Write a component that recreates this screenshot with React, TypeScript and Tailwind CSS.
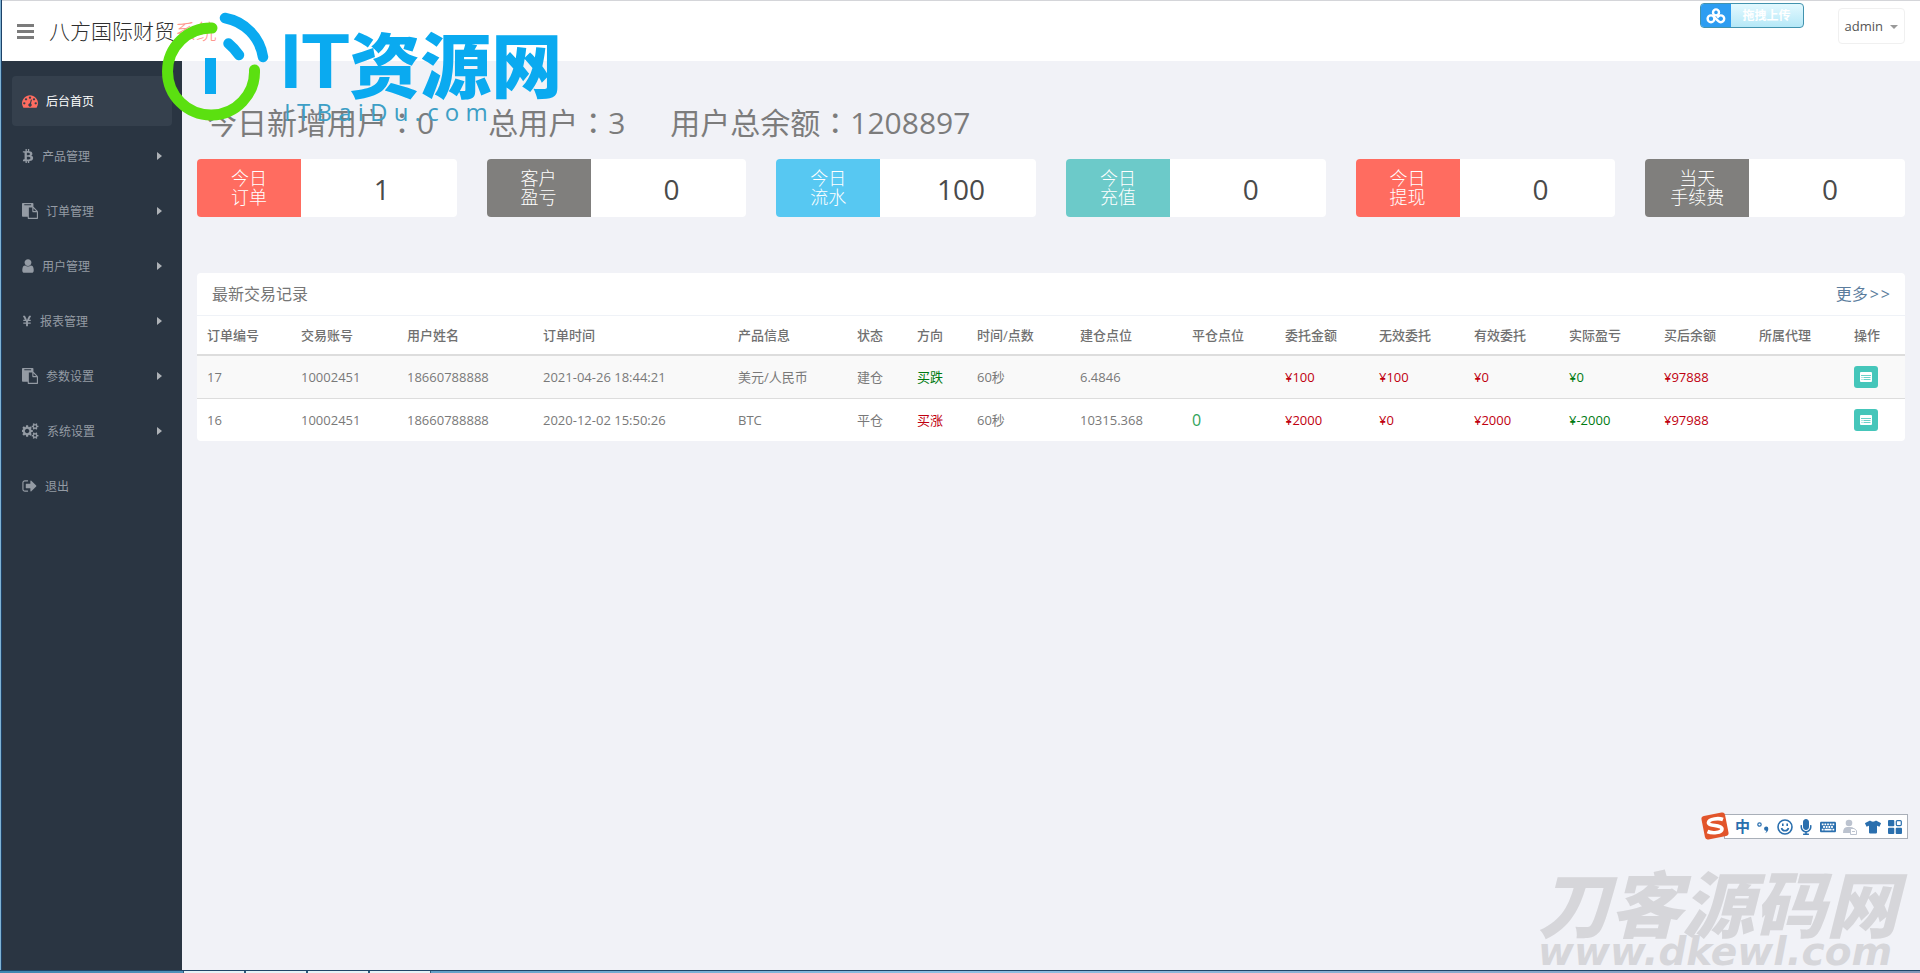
import type { ReactNode } from "react";
import { FaBtc, FaYenSign, FaMicrophone, FaKeyboard, FaTshirt } from "react-icons/fa";

const PATHS = {
  dashboard:
    "M384 1152q0-53-37.5-90.5t-90.5-37.5-90.5 37.5-37.5 90.5 37.5 90.5 90.5 37.5 90.5-37.5 37.5-90.5zm192-448q0-53-37.5-90.5t-90.5-37.5-90.5 37.5-37.5 90.5 37.5 90.5 90.5 37.5 90.5-37.5 37.5-90.5zm428 481l101-382q6-26-7.5-48.5t-38.5-29.5-48 6.5-30 39.5l-101 382q-60 5-107 43.5t-63 98.5q-20 77 20 146t117 89 146-20 89-117q16-60-6-117t-72-91zm660-33q0-53-37.5-90.5t-90.5-37.5-90.5 37.5-37.5 90.5 37.5 90.5 90.5 37.5 90.5-37.5 37.5-90.5zm-640-640q0-53-37.5-90.5t-90.5-37.5-90.5 37.5-37.5 90.5 37.5 90.5 90.5 37.5 90.5-37.5 37.5-90.5zm448 192q0-53-37.5-90.5t-90.5-37.5-90.5 37.5-37.5 90.5 37.5 90.5 90.5 37.5 90.5-37.5 37.5-90.5zm320 448q0 261-141 483-19 29-54 29h-1402q-35 0-54-29-141-221-141-483 0-182 71-348t191-286 286-191 348-71 348 71 286 191 191 286 71 348z",
  paste:
    "M768 1664h896v-640h-416q-40 0-68-28t-28-68v-416h-384v1152zm256-1440v-64q0-13-9.5-22.5t-22.5-9.5h-704q-13 0-22.5 9.5t-9.5 22.5v64q0 13 9.5 22.5t22.5 9.5h704q13 0 22.5-9.5t9.5-22.5zm256 672h299l-299-299v299zm512 128v672q0 40-28 68t-68 28h-960q-40 0-68-28t-28-68v-160h-544q-40 0-68-28t-28-68v-1344q0-40 28-68t68-28h1088q40 0 68 28t28 68v328q21 13 36 28l408 408q28 28 48 76t20 88z",
  user:
    "M1536 1399q0 109-62.5 187t-150.5 78h-854q-88 0-150.5-78t-62.5-187q0-85 8.5-160.5t31.5-152 58.5-131 94-89 134.5-34.5q131 128 313 128t313-128q76 0 134.5 34.5t94 89 58.5 131 31.5 152 8.5 160.5zm-256-887q0 159-112.5 271.5t-271.5 112.5-271.5-112.5-112.5-271.5 112.5-271.5 271.5-112.5 271.5 112.5 112.5 271.5z",
  cogs:
    "M832 896q0-106-75-181t-181-75-181 75-75 181 75 181 181 75 181-75 75-181zm768 512q0-52-38-90t-90-38-90 38-38 90q0 53 37.5 90.5t90.5 37.5 90.5-37.5 37.5-90.5zm0-1024q0-52-38-90t-90-38-90 38-38 90q0 53 37.5 90.5t90.5 37.5 90.5-37.5 37.5-90.5zm-384 421v185q0 10-7 19.5t-16 10.5l-155 24q-11 35-32 76 34 48 90 115 7 11 7 20 0 12-7 19-23 30-82.5 89.5t-78.5 59.5q-11 0-21-7l-115-90q-37 19-77 31-11 108-23 155-7 24-30 24h-186q-11 0-20-7.5t-10-17.5l-23-153q-34-10-75-31l-118 89q-7 7-20 7-11 0-21-8-144-133-144-160 0-9 7-19 10-14 41-53t47-61q-23-44-35-82l-152-24q-10-1-17-9.5t-7-19.5v-185q0-10 7-19.5t16-10.5l155-24q11-35 32-76-34-48-90-115-7-11-7-20 0-12 7-20 22-30 82-89t79-59q11 0 21 7l115 90q34-18 77-32 11-108 23-154 7-24 30-24h186q11 0 20 7.5t10 17.5l23 153q34 10 75 31l118-89q8-7 20-7 11 0 21 8 144 133 144 160 0 8-7 19-12 16-42 54t-45 60q23 48 34 82l152 23q10 2 17 10.5t7 19.5zm640 533v140q0 16-149 31-12 27-30 52 51 113 51 138 0 4-4 7-122 71-124 71-8 0-46-47t-52-68q-20 2-30 2t-30-2q-14 21-52 68t-46 47q-2 0-124-71-4-3-4-7 0-25 51-138-18-25-30-52-149-15-149-31v-140q0-16 149-31 13-29 30-52-51-113-51-138 0-4 4-7 4-2 35-20t59-34 30-16q8 0 46 46.5t52 67.5q20-2 30-2t30 2q51-71 92-112l6-2q4 0 124 70 4 3 4 7 0 25-51 138 17 23 30 52 149 15 149 31zm0-1024v140q0 16-149 31-12 27-30 52 51 113 51 138 0 4-4 7-122 71-124 71-8 0-46-47t-52-68q-20 2-30 2t-30-2q-14 21-52 68t-46 47q-2 0-124-71-4-3-4-7 0-25 51-138-18-25-30-52-149-15-149-31v-140q0-16 149-31 13-29 30-52-51-113-51-138 0-4 4-7 4-2 35-20t59-34 30-16q8 0 46 46.5t52 67.5q20-2 30-2t30 2q51-71 92-112l6-2q4 0 124 70 4 3 4 7 0 25-51 138 17 23 30 52 149 15 149 31z",
  signOut:
    "M704 1440q0 4 1 20t.5 26.5-3 23.5-10 19.5-20.5 6.5h-320q-119 0-203.5-84.5t-84.5-203.5v-704q0-119 84.5-203.5t203.5-84.5h320q13 0 22.5 9.5t9.5 22.5q0 4 1 20t.5 26.5-3 23.5-10 19.5-20.5 6.5h-320q-66 0-113 47t-47 113v704q0 66 47 113t113 47h312l11.5 1 11.5 3 8 5.5 7 9 2 13.5zm928-544q0 26-19 45l-544 544q-19 19-45 19t-45-19-19-45v-288h-448q-26 0-45-19t-19-45v-384q0-26 19-45t45-19h448v-288q0-26 19-45t45-19 45 19l544 544q19 19 19 45z",
};

function Glyph({ d, viewBox, className }: { d: string; viewBox: string; className: string }) {
  return (
    <svg viewBox={viewBox} className={className} fill="currentColor" aria-hidden="true">
      <path d={d} />
    </svg>
  );
}

type MenuItem = { label: string; icon: ReactNode; active?: boolean; children?: boolean };

const paste = <Glyph d={PATHS.paste} viewBox="0 0 1792 1792" className="h-4 w-4" />;

const MENU: MenuItem[] = [
  {
    label: "后台首页",
    active: true,
    icon: <Glyph d={PATHS.dashboard} viewBox="0 0 1792 1792" className="h-4 w-4 text-[#ff6c60]" />,
  },
  { label: "产品管理", children: true, icon: <FaBtc className="h-[14px] w-3" /> },
  { label: "订单管理", children: true, icon: paste },
  { label: "用户管理", children: true, icon: <Glyph d={PATHS.user} viewBox="256 0 1280 1792" className="h-4 w-3" /> },
  { label: "报表管理", children: true, icon: <FaYenSign className="h-3 w-[10px]" /> },
  { label: "参数设置", children: true, icon: paste },
  { label: "系统设置", children: true, icon: <Glyph d={PATHS.cogs} viewBox="0 0 1920 1792" className="h-4 w-[17px]" /> },
  { label: "退出", icon: <Glyph d={PATHS.signOut} viewBox="64 0 1600 1792" className="h-4 w-[15px]" /> },
];

const CARDS = [
  { title: ["今日", "订单"], value: "1", color: "bg-[#ff6c60]" },
  { title: ["客户", "盈亏"], value: "0", color: "bg-[#807f7d]" },
  { title: ["今日", "流水"], value: "100", color: "bg-[#57c8f2]" },
  { title: ["今日", "充值"], value: "0", color: "bg-[#6ccac9]" },
  { title: ["今日", "提现"], value: "0", color: "bg-[#ff6c60]" },
  { title: ["当天", "手续费"], value: "0", color: "bg-[#807f7d]" },
];

const RED = "text-[#c00010]";
const GREEN = "text-[#007a12]";

const COLUMNS = [
  { name: "订单编号", width: "w-[94px]" },
  { name: "交易账号", width: "w-[106px]" },
  { name: "用户姓名", width: "w-[136px]" },
  { name: "订单时间", width: "w-[195px]" },
  { name: "产品信息", width: "w-[119px]" },
  { name: "状态", width: "w-[60px]" },
  { name: "方向", width: "w-[60px]" },
  { name: "时间/点数", width: "w-[103px]" },
  { name: "建仓点位", width: "w-[112px]" },
  { name: "平仓点位", width: "w-[93px]" },
  { name: "委托金额", width: "w-[94px]" },
  { name: "无效委托", width: "w-[95px]" },
  { name: "有效委托", width: "w-[95px]" },
  { name: "实际盈亏", width: "w-[95px]" },
  { name: "买后余额", width: "w-[95px]" },
  { name: "所属代理", width: "w-[95px]" },
  { name: "操作", width: "w-[61px]" },
];

type Cell = { text: string; color?: string };

const ROWS: Cell[][] = [
  [
    { text: "17" },
    { text: "10002451" },
    { text: "18660788888" },
    { text: "2021-04-26 18:44:21" },
    { text: "美元/人民币" },
    { text: "建仓" },
    { text: "买跌", color: GREEN },
    { text: "60秒" },
    { text: "6.4846" },
    { text: "" },
    { text: "¥100", color: RED },
    { text: "¥100", color: RED },
    { text: "¥0", color: RED },
    { text: "¥0", color: GREEN },
    { text: "¥97888", color: RED },
    { text: "" },
  ],
  [
    { text: "16" },
    { text: "10002451" },
    { text: "18660788888" },
    { text: "2020-12-02 15:50:26" },
    { text: "BTC" },
    { text: "平仓" },
    { text: "买涨", color: RED },
    { text: "60秒" },
    { text: "10315.368" },
    { text: "0", color: "text-base text-[#2fa35a]" },
    { text: "¥2000", color: RED },
    { text: "¥0", color: RED },
    { text: "¥2000", color: RED },
    { text: "¥-2000", color: GREEN },
    { text: "¥97988", color: RED },
    { text: "" },
  ],
];

function Colon() {
  return <span className="font-['Noto_Sans_CJK_TC',sans-serif]">：</span>;
}

function Header() {
  return (
    <header className="flex h-[61px] items-start justify-between border-t border-[#d4d5d9] bg-white pr-[15px] pl-[15px]">
      <div className="flex h-[60px] items-center gap-[15px]">
        <button type="button" aria-label="切换菜单" className="flex w-[17px] flex-col gap-[3px]">
          <span className="h-[3px] w-full bg-[#7b7b7b]" />
          <span className="h-[3px] w-full bg-[#7b7b7b]" />
          <span className="h-[3px] w-full bg-[#7b7b7b]" />
        </button>
        <a href="#" className="text-[21px] leading-[30px] font-light text-[#2e2e2e]">
          八方国际财贸<span className="text-[#ff6c60] opacity-70">系统</span>
        </a>
      </div>
      <div className="flex items-start gap-[34px]">
        <button
          type="button"
          className="mt-[2px] flex h-[25px] w-[104px] overflow-hidden rounded-[4px] border border-[#4293ae] bg-linear-to-b from-[#e3f9ff] to-[#b5e8f7]"
        >
          <span className="flex h-full w-[30px] items-center justify-center bg-[#2d9df1]">
            <svg viewBox="0 0 20 16" className="h-4 w-5" fill="none" stroke="#fff" strokeWidth="2.4" aria-hidden="true">
              <circle cx="10" cy="4.4" r="3" />
              <circle cx="5" cy="10.8" r="3.4" />
              <path d="M7.400 8.400l5 4.800a3.400 3.400 0 1 0 0-4.800l-1.200 1.200" />
            </svg>
          </span>
          <span className="flex-1 text-xs leading-[23px] font-bold text-white">拖拽上传</span>
        </button>
        <button
          type="button"
          className="mt-[7px] flex h-9 items-center gap-[7px] rounded-[4px] border border-[#f0f0f0] px-[6px] pt-[2px] text-[13px] text-[#555]"
        >
          admin
          <svg viewBox="0 0 8 4" className="h-1 w-2" fill="#999" aria-hidden="true">
            <path d="M0 0h8L4 4z" />
          </svg>
        </button>
      </div>
    </header>
  );
}

function Sidebar() {
  return (
    <nav className="w-[180px] shrink-0 bg-[#2a3542] px-[10px] pt-[15px]">
      <ul className="flex flex-col gap-[5px]">
        {MENU.map((item) => (
          <li key={item.label}>
            <a
              href="#"
              className={
                item.active
                  ? "flex h-[50px] items-center gap-2 rounded-[4px] bg-[#35404d] px-[10px] text-xs text-white"
                  : "flex h-[50px] items-center gap-2 rounded-[4px] px-[10px] text-xs text-[#949ba4]"
              }
            >
              {item.icon}
              <span className="flex-1 pt-[2px]">{item.label}</span>
              {item.children && (
                <svg viewBox="0 0 5 8" className="h-2 w-[5px]" fill="#aeb2b7" aria-hidden="true">
                  <path d="M0 0l5 4-5 4z" />
                </svg>
              )}
            </a>
          </li>
        ))}
      </ul>
    </nav>
  );
}

function Records() {
  return (
    <section className="mt-14 overflow-hidden rounded-[4px] bg-white">
      <div className="flex h-[43px] items-center justify-between border-b border-[#eff2f7] px-[15px] text-base text-[#767676]">
        <h2>最新交易记录</h2>
        <a href="#" className="flex gap-[2px] text-[#5b7d9d]">
          <span>更多</span>
          <span>&gt;</span>
          <span>&gt;</span>
        </a>
      </div>
      <table className="w-full table-fixed border-collapse text-left text-[13px] leading-[18px] text-[#797979]">
        <colgroup>
          {COLUMNS.map((c) => (
            <col key={c.name} className={c.width} />
          ))}
        </colgroup>
        <thead>
          <tr className="h-[39px] border-b-2 border-[#ddd]">
            {COLUMNS.map((c) => (
              <th key={c.name} className="pl-[10px] font-medium whitespace-nowrap text-[#707070]">
                {c.name}
              </th>
            ))}
          </tr>
        </thead>
        <tbody>
          {ROWS.map((row, i) => (
            <tr key={row[0].text} className={i === 0 ? "h-[43px] border-b border-[#ddd] bg-[#f9f9f9]" : "h-[43px]"}>
              {row.map((cell, j) => (
                <td key={j} className={"pl-[10px] whitespace-nowrap " + (cell.color ?? "")}>
                  {cell.text}
                </td>
              ))}
              <td className="pl-[10px]">
                <button
                  type="button"
                  aria-label="查看"
                  className="flex h-[22px] w-6 items-center justify-center rounded-[3px] bg-[#45c6ba]"
                >
                  <svg viewBox="0 0 12 10" className="h-[10px] w-3" aria-hidden="true">
                    <rect width="12" height="10" rx="1" fill="#fff" />
                    <path d="M1 3.5h10M3.5 5.5h7M3.5 7.5h7M1.5 5.5h1M1.5 7.5h1" stroke="#45c6ba" strokeWidth="0.8" />
                  </svg>
                </button>
              </td>
            </tr>
          ))}
        </tbody>
      </table>
    </section>
  );
}

function SiteLogo() {
  return (
    <div className="pointer-events-none absolute top-[10px] left-[160px] flex">
      <svg viewBox="160 10 112 114" className="h-[114px] w-28" fill="none" strokeLinecap="round" aria-hidden="true">
        <path d="M212 28A43.500 43.500 0 1 0 254.500 70" stroke="#5be010" strokeWidth="11" />
        <path d="M225 18A47 47 0 0 1 263 57" stroke="#0aaaf0" strokeWidth="10.500" />
        <path d="M228.500 43.500Q234 48 239 55" stroke="#0aaaf0" strokeWidth="10.500" />
        <path d="M210.500 58V94" stroke="#0aaaf0" strokeWidth="11" strokeLinecap="butt" />
      </svg>
      <div className="flex flex-col pt-4 pl-2">
        <div className="flex h-[70px] items-center font-black whitespace-nowrap text-[#0aaaf0]">
          <span className="font-['Liberation_Sans',sans-serif] text-[78px] leading-[70px]">IT</span>
          <span className="font-['Noto_Sans_CJK_SC',sans-serif] text-[71px] leading-[70px]">资源网</span>
        </div>
        <div className="pl-1 text-2xl leading-8 whitespace-nowrap text-[#3d9fc6]">I T B a i D u . c o m</div>
      </div>
    </div>
  );
}

function InputMethodBar() {
  return (
    <div className="absolute right-3 bottom-[134px] flex h-[25px] w-[184px] items-center justify-between border border-[#a9afb8] bg-white pr-[5px] pl-[10px] text-[#2a6fae]">
      <svg viewBox="0 0 30 30" className="absolute -top-[4px] -left-[25px] h-[30px] w-[30px]" aria-hidden="true">
        <rect x="3" y="3" width="24" height="24" rx="3" fill="#e2552b" transform="rotate(-11 15 15)" />
        <path
          d="M23 8.500C19 7 9 7.500 8.500 11.500 8 15.500 22 13.500 22 18 22 22 12 22.500 7.500 20.500"
          fill="none"
          stroke="#fff"
          strokeWidth="3.600"
        />
      </svg>
      <span className="text-[15px] leading-none font-bold">中</span>
      <svg viewBox="0 0 12 14" className="h-[14px] w-3" aria-hidden="true">
        <circle cx="2.500" cy="4.500" r="1.700" fill="none" stroke="currentColor" strokeWidth="1.200" />
        <path d="M9 6.500a2.200 2.200 0 0 1 2.300 2.300c0 2.300-1.200 3.700-3.300 4.400 1-1.100 1.400-1.700 1.300-2.500A2.100 2.100 0 0 1 9 6.500z" fill="currentColor" />
      </svg>
      <svg viewBox="0 0 16 16" className="h-4 w-4" fill="none" stroke="currentColor" strokeWidth="1.600" aria-hidden="true">
        <circle cx="8" cy="8" r="7" />
        <path d="M4.500 9a3.600 3.600 0 0 0 7 0M5.800 4.500v2.500M10.200 4.500v2.500" />
      </svg>
      <FaMicrophone className="h-4 w-3" />
      <FaKeyboard className="h-4 w-4" />
      <svg viewBox="0 0 14 16" className="h-4 w-[14px]" aria-hidden="true">
        <circle cx="6" cy="4" r="3.300" fill="#bcc3cf" />
        <path d="M0 14c0-4 1.500-6 4-6h4c1.500 0 2.500.7 3 2v4z" fill="#bcc3cf" />
        <path d="M7.500 9.500h3.500l2.500 2v4h-6z" fill="#fff" stroke="#bcc3cf" strokeWidth="1" />
        <path d="M9 12.500h3" stroke="#bcc3cf" strokeWidth="1" />
      </svg>
      <FaTshirt className="h-[14px] w-4" />
      <svg viewBox="0 0 14 14" className="h-[14px] w-[14px]" fill="currentColor" aria-hidden="true">
        <rect width="6.300" height="6.300" rx="1" />
        <rect x="8.300" y="0.600" width="5" height="5" rx="1" fill="none" stroke="currentColor" strokeWidth="1.200" />
        <rect y="7.700" width="6.300" height="6.300" rx="1" />
        <rect x="7.700" y="7.700" width="6.300" height="6.300" rx="1" />
      </svg>
    </div>
  );
}

function Watermark() {
  return (
    <div className="pointer-events-none absolute right-[22px] bottom-[3px] text-[#d6d6da] italic">
      <div className="font-['Noto_Sans_CJK_SC',sans-serif] text-[72px] leading-[66px] font-black whitespace-nowrap">刀客源码网</div>
      <div className="font-['DejaVu_Sans',sans-serif] text-[39px] leading-[36px] font-bold whitespace-nowrap">www.dkewl.com</div>
    </div>
  );
}

function TaskbarEdge() {
  return (
    <div className="flex h-[3px] border-t border-[#1f4568] bg-linear-to-r from-[#3f86b0] via-[#8fc0e4] to-[#7f95b8] pl-[183px]">
      {["a", "b", "c", "d"].map((k) => (
        <span key={k} className="w-[62px] border-x border-[#2c5a7a] bg-[#e6f2f7]" />
      ))}
    </div>
  );
}

export default function App() {
  return (
    <div className="relative flex min-h-screen flex-col bg-[#f1f2f7] font-['Open_Sans','Noto_Sans_CJK_SC',sans-serif]">
      <div className="flex flex-1 border-l border-[#7fb2d4]">
        <div className="flex min-w-0 flex-1 flex-col border-l border-[#1d4268]">
          <Header />
          <div className="flex flex-1">
            <Sidebar />
            <main className="min-w-0 flex-1 px-[15px] pt-[42px]">
              <h1 className="flex h-9 pl-[10px] text-3xl leading-9 whitespace-nowrap text-[#7c7c7c]">
                <span className="mr-[54px]">
                  今日新增用户
                  <Colon />0
                </span>
                <span className="mr-[45px]">
                  总用户
                  <Colon />3
                </span>
                <span>
                  用户总余额
                  <Colon />
                  1208897
                </span>
              </h1>
              <div className="mt-5 grid grid-cols-6 gap-[30px]">
                {CARDS.map((card) => (
                  <section key={card.title.join("")} className="flex h-[58px] overflow-hidden rounded-[4px] bg-white">
                    <h2
                      className={
                        "flex w-2/5 flex-col justify-center text-center text-lg leading-[19px] font-light text-white " + card.color
                      }
                    >
                      {card.title.map((line) => (
                        <span key={line}>{line}</span>
                      ))}
                    </h2>
                    <p className="flex flex-1 items-center justify-center pt-[2px] pl-[6px] text-[28px] leading-none text-[#4a4a4a]">
                      {card.value}
                    </p>
                  </section>
                ))}
              </div>
              <Records />
            </main>
          </div>
        </div>
      </div>
      <TaskbarEdge />
      <SiteLogo />
      <InputMethodBar />
      <Watermark />
    </div>
  );
}
